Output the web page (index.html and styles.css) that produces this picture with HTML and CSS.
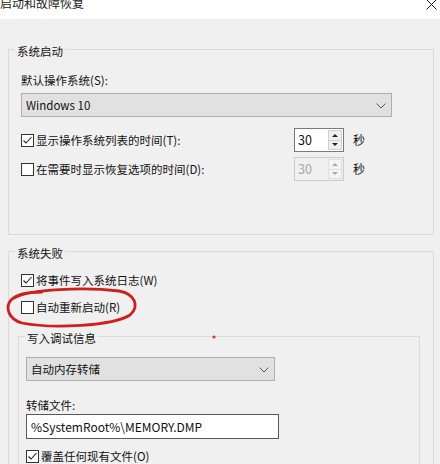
FILE: index.html
```html
<!DOCTYPE html>
<html lang="zh-CN">
<head>
<meta charset="utf-8">
<title>启动和故障恢复</title>
<link rel="stylesheet" href="styles.css">
</head>
<body>
<div class="window">
  <div class="titlebar">
    <span class="title">启动和故障恢复</span>
    <svg class="close" width="11" height="11" viewBox="0 0 11 11"><path d="M0.5 0.5 L10.5 10.5 M10.5 0.5 L0.5 10.5" stroke="#111" stroke-width="1" fill="none"/></svg>
  </div>
  <div class="content">
    <fieldset class="group g1">
      <legend>系统启动</legend>
      <div class="label">默认操作系统(S):</div>
      <div class="select os">
        <span>Windows 10</span>
        <svg class="chev" width="10" height="6" viewBox="0 0 10 6"><polyline points="0.5,0.5 5,5 9.5,0.5" stroke="#555" stroke-width="1" fill="none"/></svg>
      </div>
      <div class="timerow first">
        <div class="check"><span class="cb"><svg width="11" height="11" viewBox="0 0 11 11"><polyline points="1.5,5.5 4,8 9.5,2" stroke="#222" stroke-width="1.1" fill="none"/></svg></span>显示操作系统列表的时间(T):</div>
        <div class="spin"><span class="val">30</span><span class="btns"><span class="btn"><i class="up"></i></span><span class="btn"><i class="down"></i></span></span></div>
        <span class="unit">秒</span>
      </div>
      <div class="timerow second">
        <div class="check"><span class="cb"></span>在需要时显示恢复选项的时间(D):</div>
        <div class="spin disabled"><span class="val">30</span><span class="btns"><span class="btn"><i class="up"></i></span><span class="btn"><i class="down"></i></span></span></div>
        <span class="unit">秒</span>
      </div>
    </fieldset>

    <fieldset class="group g2">
      <legend>系统失败</legend>
      <div class="check"><span class="cb"><svg width="11" height="11" viewBox="0 0 11 11"><polyline points="1.5,5.5 4,8 9.5,2" stroke="#222" stroke-width="1.1" fill="none"/></svg></span>将事件写入系统日志(W)</div>
      <div class="check row2"><span class="cb"></span>自动重新启动(R)</div>
      <fieldset class="group inner">
        <legend>写入调试信息</legend>
        <div class="select dump">
          <span>自动内存转储</span>
          <svg class="chev" width="10" height="6" viewBox="0 0 10 6"><polyline points="0.5,0.5 5,5 9.5,0.5" stroke="#555" stroke-width="1" fill="none"/></svg>
        </div>
        <div class="label filelabel">转储文件:</div>
        <div class="textbox">%SystemRoot%\MEMORY.DMP</div>
        <div class="check overwrite"><span class="cb"><svg width="11" height="11" viewBox="0 0 11 11"><polyline points="1.5,5.5 4,8 9.5,2" stroke="#222" stroke-width="1.1" fill="none"/></svg></span>覆盖任何现有文件(O)</div>
      </fieldset>
    </fieldset>
  </div>
  <svg class="annot" width="440" height="464" viewBox="0 0 440 464">
    <path d="M14 298 C 30 289, 85 287, 119 291 C 135 294, 140 306, 130 315 C 113 326, 52 329, 22 323 C 8 319, 5 307, 11 300 C 17 294, 28 292, 42 292" stroke="#cc1f1f" stroke-width="2.8" fill="none" stroke-linecap="round"/>
    <circle cx="214" cy="337" r="1.6" fill="#e0302e"/>
  </svg>
</div>
</body>
</html>
```
FILE: styles.css
```css
* { box-sizing: border-box; }
html, body {
  margin: 0;
  padding: 0;
}
body {
  width: 440px;
  height: 464px;
  overflow: hidden;
  background: #f0f0f0;
  font-family: "Noto Sans CJK SC", "Noto Sans", sans-serif;
  font-size: 11.5px;
  line-height: 16px;
  color: #111;
}
.window {
  position: relative;
  width: 440px;
  height: 464px;
  overflow: hidden;
}
.titlebar {
  height: 19px;
  background: #fff;
  display: flex;
  justify-content: space-between;
  align-items: flex-start;
  overflow: hidden;
}
.title {
  font-size: 12px;
  line-height: 14px;
  margin-top: -4px;
  color: #222;
}
.close {
  margin-top: -1px;
  margin-right: 3px;
}
.content {
  padding: 21px 6px 0 8px;
}
.group {
  margin: 0;
  border: 1px solid #dadada;
  min-width: 0;
}
.group legend {
  padding: 4px 2px 0 2px;
  margin-left: -6px;
  line-height: 14px;
}
.g1 {
  padding: 14px 12px 53px 12px;
}
.label {
  height: 16px;
}
.select {
  display: flex;
  align-items: center;
  justify-content: space-between;
  height: 24px;
  background: #e1e1e1;
  border: 1px solid #adadad;
  padding: 0 5px 0 4px;
}
.select.os {
  margin-top: 5px;
  width: 371px;
}
.select.dump {
  width: 249px;
}
.chev { margin-top: 1px; }
.timerow {
  display: grid;
  grid-template-columns: 264px 50px auto;
  column-gap: 9px;
  align-items: center;
}
.timerow.first { margin-top: 11px; }
.timerow.second { margin-top: 5px; }
.check {
  display: flex;
  align-items: center;
  height: 16px;
}
.cb {
  width: 13px;
  height: 13px;
  border: 1px solid #333;
  background: #fff;
  margin-right: 2px;
  display: flex;
  align-items: center;
  justify-content: center;
  flex: none;
}
.spin {
  height: 24px;
  border: 1px solid #7a7a7a;
  background: #fff;
  display: flex;
  justify-content: space-between;
  align-items: stretch;
  padding: 1px 1px 1px 3px;
}
.spin .val {
  font-size: 12.5px;
  line-height: 20px;
}
.btns {
  display: flex;
  flex-direction: column;
  width: 14px;
}
.btn {
  flex: 1;
  background: #f0f0f0;
  border: 1px solid #d0d0d0;
  display: flex;
  align-items: center;
  justify-content: center;
}
.btn + .btn { border-top: none; }
.up {
  width: 0; height: 0;
  border-left: 3px solid transparent;
  border-right: 3px solid transparent;
  border-bottom: 3px solid #222;
}
.down {
  width: 0; height: 0;
  border-left: 3px solid transparent;
  border-right: 3px solid transparent;
  border-top: 3px solid #222;
}
.spin.disabled {
  border-color: #cccccc;
  background: #f0f0f0;
  color: #a8a8a8;
}
.spin.disabled .btn { border-color: #e0e0e0; background: #f4f4f4; }
.spin.disabled .up { border-bottom-color: #aaa; }
.spin.disabled .down { border-top-color: #aaa; }
.unit {
  font-size: 12px;
}
.g2 {
  margin-top: 7px;
  padding: 12px 12px 40px 12px;
}
.row2 { margin-top: 11px; }
.inner {
  margin-top: 12px;
  margin-left: -3px;
  width: 402px;
  padding: 12px 7px 30px 7px;
}
.inner legend { margin-left: -1px; }
.filelabel { margin-top: 16px; }
.textbox {
  margin-top: 1px;
  width: 253px;
  height: 25px;
  background: #fff;
  border: 1px solid #5a5a5a;
  padding: 0 4px;
  line-height: 23px;
  font-size: 12px;
}
.overwrite { margin-top: 9px; }
.annot {
  position: absolute;
  left: 0;
  top: 0;
  pointer-events: none;
}
```
